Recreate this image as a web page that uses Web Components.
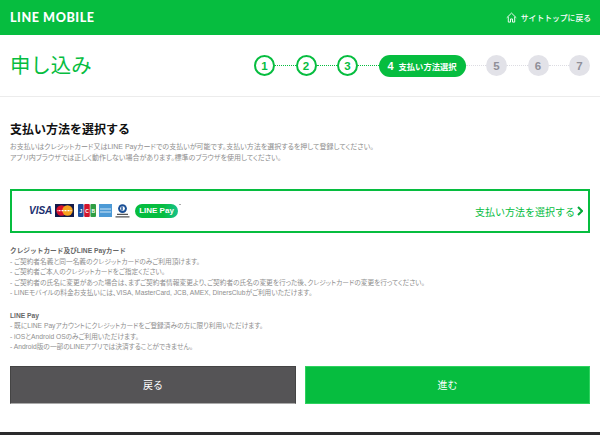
<!DOCTYPE html>
<html lang="ja">
<head>
<meta charset="utf-8">
<title>LINE MOBILE</title>
<style>
  html, body { margin: 0; padding: 0; background: #fff; }
  body { font-family: "Liberation Sans", "Noto Sans CJK JP", sans-serif; overflow: hidden; height: 435px; }
</style>
</head>
<body>
<site-header></site-header>
<page-title heading="申し込み"></page-title>
<main-section>
  <section-intro heading="支払い方法を選択する">
    お支払いはクレジットカード又はLINE Payカードでの支払いが可能です。支払い方法を選択するを押して登録してください。<br>
    アプリ内ブラウザでは正しく動作しない場合があります。標準のブラウザを使用してください。
  </section-intro>
  <pay-select label="支払い方法を選択する"></pay-select>
  <note-block heading="クレジットカード及びLINE Payカード" style="margin-top:13px">
    <div>- ご契約者名義と同一名義のクレジットカードのみご利用頂けます。</div>
    <div>- ご契約者ご本人のクレジットカードをご指定ください。</div>
    <div>- ご契約者の氏名に変更があった場合は、まずご契約者情報変更より、ご契約者の氏名の変更を行った後、クレジットカードの変更を行ってください。</div>
    <div>- LINEモバイルの料金お支払いには、VISA, MasterCard, JCB, AMEX, DinersClubがご利用いただけます。</div>
  </note-block>
  <note-block heading="LINE Pay" style="margin-top:12px">
    <div>- 既にLINE Payアカウントにクレジットカードをご登録済みの方に限り利用いただけます。</div>
    <div>- iOSとAndroid OSのみご利用いただけます。</div>
    <div>- Android版の一部のLINEアプリでは決済することができません。</div>
  </note-block>
  <nav-buttons back="戻る" next="進む"></nav-buttons>
</main-section>
<site-footer></site-footer>

<script>
class SiteHeader extends HTMLElement {
  constructor() {
    super();
    this.attachShadow({ mode: 'open' });
    this.shadowRoot.innerHTML = `
    <style>
      :host { display: flex; height: 35px; background: #06bd3f; color: #fff; align-items: center; justify-content: space-between; padding: 0 9px 0 10px; box-sizing: border-box; }
      .logo { font: 900 12.6px "Lato", "Liberation Sans", sans-serif; letter-spacing: .55px; }
      a { display: flex; align-items: center; gap: 4px; font: 500 7.8px "Noto Sans CJK JP", sans-serif; color: #fff; }
      svg { width: 11px; height: 11px; }
    </style>
    <div class="logo">LINE MOBILE</div>
    <a><svg viewBox="0 0 12 12" fill="none" stroke="#fff" stroke-width="1"><path d="M.8 6.3 6 1.2l5.2 5.1M2.5 5.2v5.8h2.4V7.6h2.2V11h2.4V5.2"/></svg>サイトトップに戻る</a>`;
  }
}
customElements.define('site-header', SiteHeader);

class StepItem extends HTMLElement {
  constructor() {
    super();
    this.attachShadow({ mode: 'open' });
    const state = this.getAttribute('state') || 'todo';
    this.shadowRoot.innerHTML = `
    <style>
      :host { display: flex; align-items: center; }
      .n { box-sizing: border-box; width: 21px; height: 21px; border-radius: 50%; display: flex; align-items: center; justify-content: center; font: 700 11.5px "Liberation Sans", sans-serif; }
      .done { border: 2px solid #06bd3f; color: #06bd3f; background: #fff; }
      .todo { background: #e2e2e8; color: #8f8f98; }
      .now { width: 87px; height: 22px; border-radius: 11px; background: #06bd3f; color: #fff; font-size: 11px; }
    </style>
    <div class="n ${state}"><slot></slot></div>`;
  }
}
customElements.define('step-item', StepItem);

class PageTitle extends HTMLElement {
  constructor() {
    super();
    this.attachShadow({ mode: 'open' });
    this.shadowRoot.innerHTML = `
    <style>
      :host { display: flex; height: 62px; box-sizing: border-box; border-bottom: 1px solid #ececec; align-items: center; justify-content: space-between; padding: 0 10px; }
      h1 { margin: 0 0 3px; font: 400 20.4px "Noto Sans CJK JP", sans-serif; color: #06bd3f; }
      .steps { display: flex; align-items: center; }
      .dots { width: 20.5px; border-top: 1.5px dotted #06bd3f; }
      .dots.off { border-top-color: #dcdce2; }
    </style>
    <h1>${this.getAttribute('heading')}</h1>
    <div class="steps">
      <step-item state="done">1</step-item><i class="dots"></i>
      <step-item state="done">2</step-item><i class="dots"></i>
      <step-item state="done">3</step-item><i class="dots"></i>
      <step-item state="now">4<span style="font:700 8.3px 'Noto Sans CJK JP',sans-serif;margin-left:5px">支払い方法選択</span></step-item><i class="dots off"></i>
      <step-item>5</step-item><i class="dots off"></i>
      <step-item>6</step-item><i class="dots off"></i>
      <step-item>7</step-item>
    </div>`;
  }
}
customElements.define('page-title', PageTitle);

class MainSection extends HTMLElement {
  constructor() {
    super();
    this.attachShadow({ mode: 'open' });
    this.shadowRoot.innerHTML = `
    <style>
      :host { display: block; padding: 24px 10px 0; height: 335px; box-sizing: border-box; }
    </style>
    <slot></slot>`;
  }
}
customElements.define('main-section', MainSection);

class SectionIntro extends HTMLElement {
  constructor() {
    super();
    this.attachShadow({ mode: 'open' });
    this.shadowRoot.innerHTML = `
    <style>
      :host { display: block; height: 68px; color: #8e8e8e; font: 400 7px/10.5px "Liberation Sans", "Noto Sans CJK JP", sans-serif; font-feature-settings: "palt"; }
      h2 { margin: 0 0 5px; font: 700 12px/16px "Noto Sans CJK JP", sans-serif; color: #111; font-feature-settings: normal; }
    </style>
    <h2>${this.getAttribute('heading')}</h2>
    <slot></slot>`;
  }
}
customElements.define('section-intro', SectionIntro);

class PaySelect extends HTMLElement {
  constructor() {
    super();
    this.attachShadow({ mode: 'open' });
    this.shadowRoot.innerHTML = `
    <style>
      :host { display: flex; height: 44px; box-sizing: border-box; border: 2px solid #06bd3f; align-items: center; justify-content: space-between; padding: 0 5px 0 17px; }
      .cards { display: flex; align-items: center; margin-bottom: 1px; }
      .visa { font: italic 700 10px "Liberation Sans", sans-serif; color: #1a2e6e; width: 26px; }
      .pay { position: relative; display: flex; align-items: center; justify-content: center; width: 43px; height: 14px; border-radius: 7px; background: linear-gradient(90deg, #06bd3f 65%, #17c18c); color: #fff; font: 700 8px "Liberation Sans", sans-serif; margin-left: 4px; }
      .pay i { position: absolute; left: 44px; top: 0; width: 2px; height: 1px; background: #aaa; }
      .go { display: flex; align-items: center; gap: 2px; font: 400 10px "Noto Sans CJK JP", sans-serif; color: #06bd3f; }
      svg { display: block; }
    </style>
    <div class="cards">
      <span class="visa">VISA</span>
      <svg width="19" height="13" viewBox="0 0 19 13" style="margin-right:4px"><rect width="19" height="13" fill="#131a4a"/><circle cx="6.5" cy="6.5" r="5.2" fill="#d8102a"/><circle cx="12.5" cy="6.5" r="5.2" fill="#f6a21e"/><path d="M2.5 6.7h14" stroke="#fff" stroke-width="1.2" stroke-dasharray="1 .5"/></svg>
      <svg width="18" height="13" viewBox="0 0 18 13" style="margin-right:3px"><rect width="5.6" height="13" rx="1" fill="#1d4f9c"/><rect x="6.2" width="5.6" height="13" rx="1" fill="#d3142c"/><rect x="12.4" width="5.6" height="13" rx="1" fill="#2f9e44"/><g fill="#fff" font-family="Liberation Sans" font-weight="700" font-size="5" text-anchor="middle"><text x="2.8" y="9">J</text><text x="9" y="9">C</text><text x="15.2" y="9">B</text></g></svg>
      <svg width="13" height="13" viewBox="0 0 13 13" style="margin-right:2px"><rect width="13" height="13" fill="#4c9ad6"/><path d="M1 5h11M1 8h11" stroke="#cfe6f7" stroke-width="1"/></svg>
      <svg width="17" height="14" viewBox="0 0 17 14"><circle cx="8.5" cy="4.6" r="4.4" fill="#1a4f96"/><circle cx="8.5" cy="4.6" r="2.4" fill="#fff"/><path d="M8 2.6v4" stroke="#1a4f96" stroke-width="1.4"/><path d="M3 10.4h11M1.5 12.8h14" stroke="#555" stroke-width="1.2"/></svg>
      <span class="pay">LINE Pay<i></i></span>
    </div>
    <div class="go">${this.getAttribute('label')}<svg width="6" height="10" viewBox="0 0 6 10" fill="none" stroke="#06a838" stroke-width="2"><path d="M1 1l4 4-4 4"/></svg></div>`;
  }
}
customElements.define('pay-select', PaySelect);

class NoteBlock extends HTMLElement {
  constructor() {
    super();
    this.attachShadow({ mode: 'open' });
    this.shadowRoot.innerHTML = `
    <style>
      :host { display: block; color: #8e8e8e; font: 400 6.7px/10.5px "Liberation Sans", "Noto Sans CJK JP", sans-serif; font-feature-settings: "palt"; }
      h3 { margin: 0; font: 700 6.7px/10.5px "Liberation Sans", "Noto Sans CJK JP", sans-serif; color: #666; }
    </style>
    <h3>${this.getAttribute('heading')}</h3>
    <slot></slot>`;
  }
}
customElements.define('note-block', NoteBlock);

class NavButtons extends HTMLElement {
  constructor() {
    super();
    this.attachShadow({ mode: 'open' });
    this.shadowRoot.innerHTML = `
    <style>
      :host { display: grid; grid-template-columns: 286px 285px; column-gap: 9px; margin-top: 13px; }
      a { display: flex; height: 38px; align-items: center; justify-content: center; color: #fff; font: 400 10px "Noto Sans CJK JP", sans-serif; box-sizing: border-box; }
      .b { background: #555456; border: 1px solid #444; border-bottom-color: #aaa; }
      .n { background: #06bd3f; border: 1px solid #2ed25f; }
    </style>
    <a class="b">${this.getAttribute('back')}</a>
    <a class="n">${this.getAttribute('next')}</a>`;
  }
}
customElements.define('nav-buttons', NavButtons);

class SiteFooter extends HTMLElement {
  constructor() {
    super();
    this.attachShadow({ mode: 'open' });
    this.shadowRoot.innerHTML = `
    <style>
      :host { display: block; height: 3px; background: #2a2a2c; }
    </style>`;
  }
}
customElements.define('site-footer', SiteFooter);
</script>
</body>
</html>
